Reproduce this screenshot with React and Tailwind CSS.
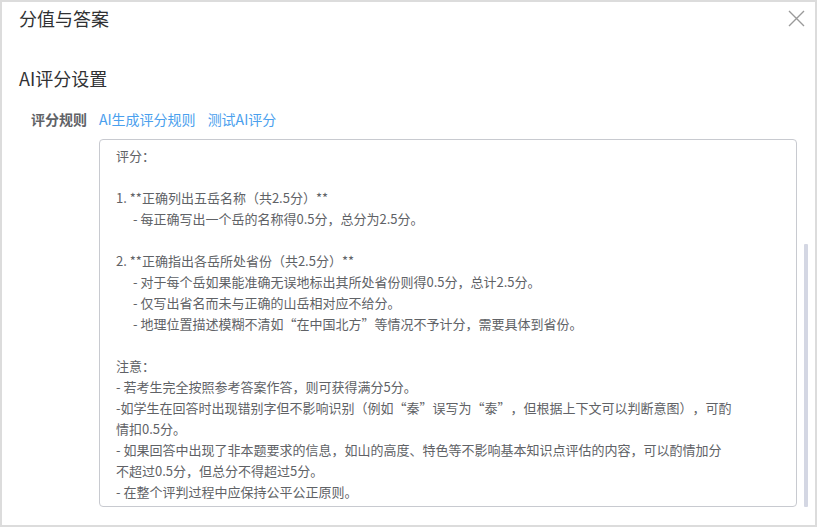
import React from 'react';

// indent: true → 子项，左侧缩进
const lines = [
  ['评分：'],
  [''],
  ['1. **正确列出五岳名称（共2.5分）**'],
  ['- 每正确写出一个岳的名称得0.5分，总分为2.5分。', true],
  [''],
  ['2. **正确指出各岳所处省份（共2.5分）**'],
  ['- 对于每个岳如果能准确无误地标出其所处省份则得0.5分，总计2.5分。', true],
  ['- 仅写出省名而未与正确的山岳相对应不给分。', true],
  ['- 地理位置描述模糊不清如“在中国北方”等情况不予计分，需要具体到省份。', true],
  [''],
  ['注意：'],
  ['- 若考生完全按照参考答案作答，则可获得满分5分。'],
  ['-如学生在回答时出现错别字但不影响识别（例如“秦”误写为“泰”，但根据上下文可以判断意图），可酌'],
  ['情扣0.5分。'],
  ['- 如果回答中出现了非本题要求的信息，如山的高度、特色等不影响基本知识点评估的内容，可以酌情加分'],
  ['不超过0.5分，但总分不得超过5分。'],
  ['- 在整个评判过程中应保持公平公正原则。'],
];

const font = {
  fontFamily: '"Noto Sans CJK SC", sans-serif',
  fontFeatureSettings: '"chws" 0, "halt" 0, "palt" 0',
};

export default function App() {
  return (
    <div
      lang="zh-CN"
      className="w-[817px] h-[527px] bg-[#dcdcdc] pt-[2px] px-[2px] overflow-hidden [text-spacing-trim:space-all]"
      style={font}
    >
      <div className="bg-white h-[523px] flex flex-col">
        {/* header */}
        <div className="flex items-center justify-between pl-[17px] pr-[10px] h-[32px]">
          <span className="text-[18px] text-[#303133] leading-none">分值与答案</span>
          <svg width="17" height="17" viewBox="0 0 17 17" className="text-[#9a9a9a]">
            <path d="M1 1L16 16M16 1L1 16" stroke="currentColor" strokeWidth="1.4" />
          </svg>
        </div>

        <div className="pl-[17px] pt-[32px]">
          <div className="text-[18px] text-[#303133] leading-[24px]">AI评分设置</div>
        </div>

        <div className="flex pl-[29px] pt-[19px] pr-[8px]">
          <div className="w-[68px] shrink-0 text-[14px] font-bold text-[#606266] leading-[20px]">评分规则</div>
          <div className="flex-1 flex flex-col">
            <div className="flex gap-[12px] text-[14px] text-[#4aa0ee] leading-[20px]">
              <span>AI生成评分规则</span>
              <span>测试AI评分</span>
            </div>
            <div className="flex mt-[10px] gap-[7px]">
              <div className="w-[698px] h-[368px] border border-[#c8cad0] rounded-[4px] pl-[16px] pt-[5px] overflow-hidden">
                {lines.map(([text, indent], i) => (
                  <div
                    key={i}
                    className={
                      indent
                        ? 'text-[13px] leading-[21px] h-[21px] text-[#606266] whitespace-pre pl-[17px]'
                        : 'text-[13px] leading-[21px] h-[21px] text-[#606266] whitespace-pre'
                    }
                  >
                    {text}
                  </div>
                ))}
              </div>
              <div className="flex flex-col justify-end h-[368px]">
                <div className="w-[4px] h-[263px] bg-[#d4d7e3] rounded-[1px]"></div>
              </div>
            </div>
          </div>
        </div>
      </div>
    </div>
  );
}
